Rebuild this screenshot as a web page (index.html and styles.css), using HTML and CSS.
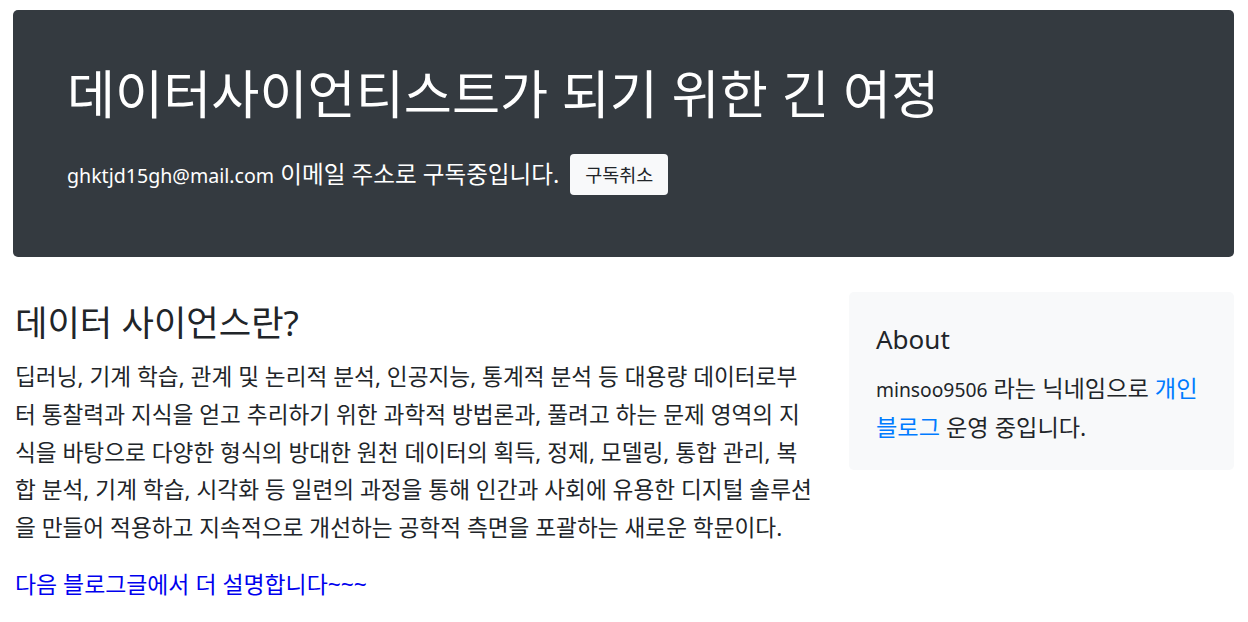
FILE: index.html
```html
<!DOCTYPE html>
<html lang="ko">
<head>
<meta charset="utf-8">
<title>데이터사이언티스트가 되기 위한 긴 여정</title>
<link rel="stylesheet" href="styles.css">
</head>
<body>
<div class="page">
  <header class="hero">
    <h1 class="hero-title">데이터사이언티스트가 되기 위한 긴 여정</h1>
    <div class="hero-sub">
      <p class="hero-lead"><span class="latin">ghktjd15gh@mail.com</span> 이메일 주소로 구독중입니다.</p>
      <button class="btn-light" type="button">구독취소</button>
    </div>
  </header>
  <div class="row">
    <main class="main-col">
      <h2 class="post-title">데이터 사이언스란?</h2>
      <p class="post-text">딥러닝, 기계 학습, 관계 및 논리적 분석, 인공지능, 통계적 분석 등 대용량 데이터로부터 통찰력과 지식을 얻고 추리하기 위한 과학적 방법론과, 풀려고 하는 문제 영역의 지식을 바탕으로 다양한 형식의 방대한 원천 데이터의 획득, 정제, 모델링, 통합 관리, 복합 분석, 기계 학습, 시각화 등 일련의 과정을 통해 인간과 사회에 유용한 디지털 솔루션을 만들어 적용하고 지속적으로 개선하는 공학적 측면을 포괄하는 새로운 학문이다.</p>
      <p class="post-more"><a class="more-link" href="#">다음 블로그글에서 더 설명합니다~~~</a></p>
    </main>
    <aside class="side-col">
      <div class="about">
        <h4 class="about-title">About</h4>
        <p class="about-text"><span class="latin">minsoo9506</span> 라는 닉네임으로 <a class="about-link" href="#">개인 블로그</a> 운영 중입니다.</p>
      </div>
    </aside>
  </div>
</div>
</body>
</html>
```
FILE: styles.css
```css
* { box-sizing: border-box; }
html, body {
  margin: 0;
  padding: 0;
  background: #fff;
}
body {
  font-family: "Noto Sans", "Noto Sans CJK KR", sans-serif;
  color: #212529;
}
.latin {
  font-size: 0.83em;
}
.page {
  padding: 10px 14px 0 13px;
}
.hero {
  background: #343a40;
  border-radius: 5px;
  padding: 53px 40px 62px 54px;
  color: #fff;
}
.hero-title {
  margin: 0;
  font-size: 52.3px;
  font-weight: 400;
  line-height: 1.2;
  white-space: nowrap;
}
.hero-sub {
  display: flex;
  align-items: center;
  gap: 11px;
  margin-top: 28px;
  height: 41px;
}
.hero-lead {
  margin: 0;
  font-size: 23.6px;
  line-height: 1.5;
  white-space: nowrap;
}
.btn-light {
  height: 41px;
  padding: 0 15px;
  border: 0;
  border-radius: 4px;
  background: #f8f9fa;
  color: #212529;
  font-family: "Noto Sans", "Noto Sans CJK KR", sans-serif;
  font-size: 18.5px;
}
.row {
  display: flex;
  margin-top: 35px;
}
.main-col {
  width: 836px;
  padding: 9px 34.5px 0 2px;
}
.side-col {
  width: 385px;
}
.post-title {
  margin: 0 0 15px;
  font-size: 35.25px;
  font-weight: 400;
  line-height: 1.2;
}
.post-text {
  margin: 0 0 19px;
  font-size: 22.65px;
  line-height: 37.75px;
}
.post-more {
  margin: 0;
  font-size: 22.9px;
  line-height: 37.75px;
}
.more-link {
  color: #0000ee;
  text-decoration: none;
}
.about {
  background: #f8f9fa;
  border-radius: 5px;
  padding: 32px 22px 24px 27px;
}
.about-title {
  margin: 0 0 15px;
  font-size: 26px;
  font-weight: 400;
  line-height: 1.2;
}
.about-text {
  margin: 0;
  font-size: 23.2px;
  line-height: 37.75px;
}
.about-link {
  color: #007bff;
  text-decoration: none;
}
```
